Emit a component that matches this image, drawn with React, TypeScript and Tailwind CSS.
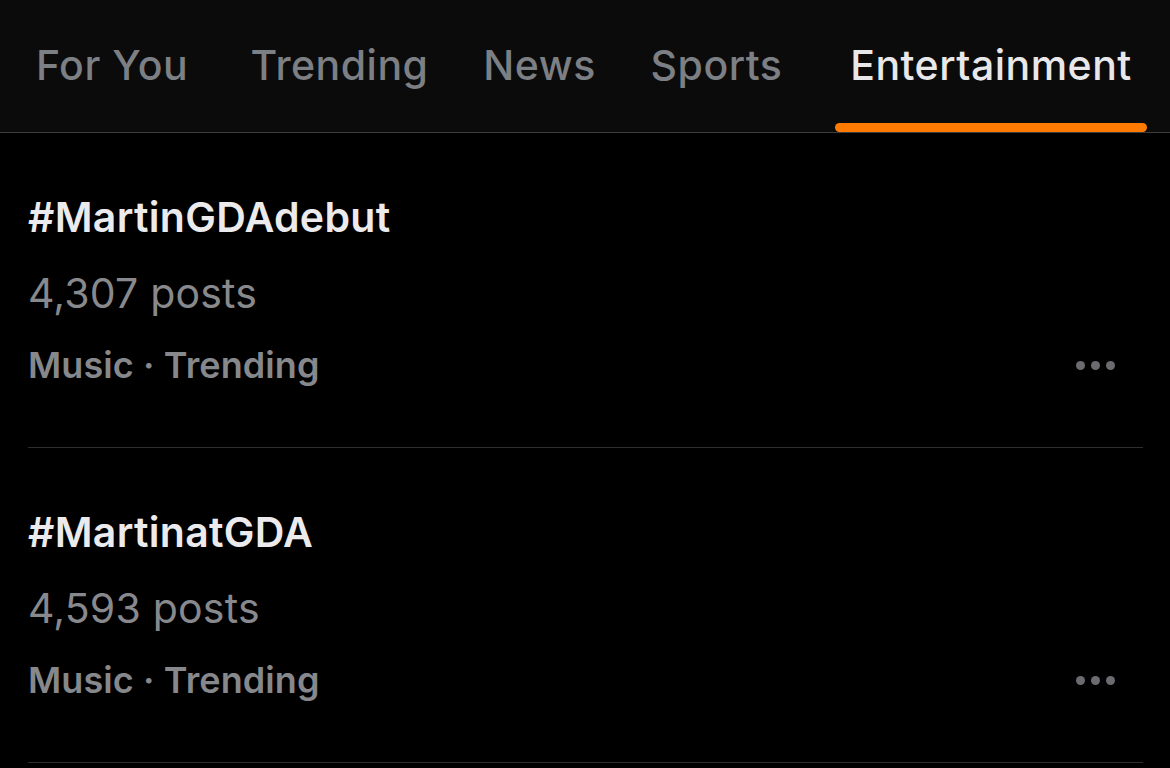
import React from "react";

// widths/margins taken from the screenshot so each label sits where it should
const tabs = [
  { label: "For You", cell: "w-[178px]" },
  { label: "Trending", cell: "ml-[37px] w-[203px]" },
  { label: "News", cell: "ml-[30px] w-[137px]" },
  { label: "Sports", cell: "ml-[28px] w-[161px]" },
  { label: "Entertainment", cell: "ml-[38px] w-[312px]" },
];

const trends = [
  { tag: "#MartinGDAdebut", posts: "4,307 posts", meta: "Music · Trending" },
  { tag: "#MartinatGDA", posts: "4,593 posts", meta: "Music · Trending" },
];

function MoreDots() {
  return (
    <div className="flex items-center gap-[6px] pr-[28px]">
      <span className="h-[9px] w-[9px] rounded-full bg-[#6c6c70]" />
      <span className="h-[9px] w-[9px] rounded-full bg-[#6c6c70]" />
      <span className="h-[9px] w-[9px] rounded-full bg-[#6c6c70]" />
    </div>
  );
}

export default function App() {
  return (
    <div
      className="h-[768px] w-[1170px] overflow-hidden bg-black"
      style={{ fontFamily: "Inter, 'Noto Sans', sans-serif" }}
    >
      {/* tab bar */}
      <div className="flex h-[133px] items-end border-b border-[#3c3c3e] bg-[#0b0b0b] pl-[23px]">
        {tabs.map((t) => {
          const active = t.label === "Entertainment";
          return (
            <div key={t.label} className={"flex flex-col items-center " + t.cell}>
              <span
                className={
                  "pb-[37px] text-[41px] font-medium leading-none tracking-[0.5px] whitespace-nowrap " +
                  (active ? "text-[#e8e8ea]" : "text-[#7c7f84]")
                }
              >
                {t.label}
              </span>
              <span
                className={
                  "h-[9px] w-full rounded-full " +
                  (active ? "bg-[#ff7a00]" : "bg-transparent")
                }
              />
            </div>
          );
        })}
      </div>

      {/* trends */}
      <div className="pl-[28px] pr-[27px]">
        {trends.map((tr) => (
          <div key={tr.tag} className="h-[315px] border-b border-[#2e2e30] pt-[64px]">
            <div className="text-[41px] font-semibold leading-none tracking-[0.3px] text-[#ebebed]">
              {tr.tag}
            </div>
            <div className="mt-[35px] text-[41px] font-normal leading-none tracking-[0.2px] text-[#88898d]">
              {tr.posts}
            </div>
            <div className="mt-[33px] flex items-center justify-between">
              <span className="text-[36px] font-semibold leading-none tracking-[0.1px] text-[#86888c]">
                {tr.meta}
              </span>
              <MoreDots />
            </div>
          </div>
        ))}
      </div>
    </div>
  );
}
